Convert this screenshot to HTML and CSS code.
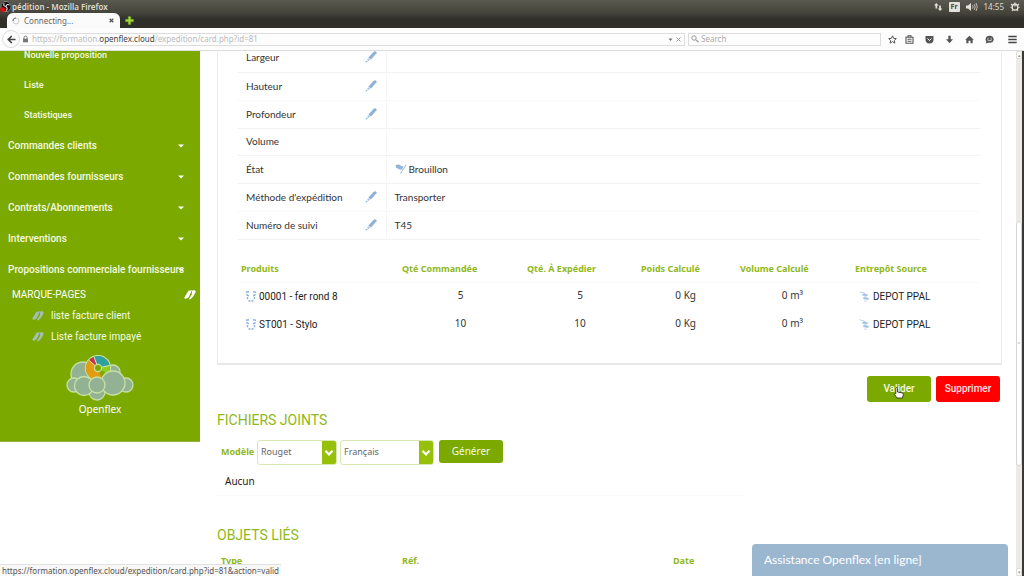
FILE: index.html
```html
<!DOCTYPE html>
<html lang="fr">
<head>
<meta charset="utf-8">
<title>Expédition</title>
<link rel="stylesheet" href="styles.css">
</head>
<body>
<svg class="defs" aria-hidden="true">
  <symbol id="pencil" viewBox="0 0 12 12"><path d="M10 .2c1.200 0 2 1 1.500 2L6 8.400 3.300 6.800 8.700.8z" fill="#8fb0d6"/><path d="M3 7.200l2.200 1.400-1.800 1.400-1.300-.8z" fill="#a9c3e0"/><path d="M1.700 9.700l1.100.9-1.700.9-.7-.5z" fill="#8fb0d6"/></symbol>
  <symbol id="book" viewBox="0 0 12 10"><path d="M4.500.800L8 .3 4.500 7.500 1.500 9 .2 7.800zM8.300.300h2.500l1 1.500-2.600 4.800-3 2.900-1.300-.5 2.900-4.500z" fill="currentColor"/></symbol>
  <symbol id="box" viewBox="0 0 12 12"><path d="M1 1.300l3-.5M11 1.300l-3-.5M1.300 3.500l2.700 1.300M10.700 3.500L8 4.800M2.500 6v2.300M9.500 6v2.300M3.500 9.500l2 .8M8.500 9.500l-2 .8" stroke="#8fb4dc" stroke-width="1.400" fill="none"/></symbol>
  <symbol id="depot" viewBox="0 0 12 12"><path d="M.5.700l3 1h2M3 4l2-1.500 4 1.500-2 1.300zM4 7l1.500-1 4.500 1.500-1 1.200-4.500-.9zM5 9.800l3 .7" stroke="#b4cce6" stroke-width=".7" fill="#a0bfe2"/></symbol>
  <symbol id="caret" viewBox="0 0 6 4"><path d="M0 .500h6L3 3.500z" fill="#fff"/></symbol>
  <symbol id="chevron" viewBox="0 0 10 8"><path d="M1.500 1.800L5 5.500l3.500-3.700" stroke="#fff" stroke-width="2.200" fill="none"/></symbol>
</svg>

<header class="browser">
  <div class="titlebar">
    <svg class="app-logo" viewBox="0 0 13 13"><circle cx="6.500" cy="6" r="6" fill="#111"/><circle cx="6.500" cy="6" r="5.500" fill="none" stroke="#ccc" stroke-width=".7"/><path d="M6.500 6Q3 5.500 4.500 2.500M6.500 6q1-3.500 4-1.500M6.500 6q2.500 2.500 0 4.500" stroke="#ddd" stroke-width="1.200" fill="none"/><circle cx="3" cy="9.500" r="2.600" fill="#f00808"/></svg>
    <span class="window-title">pédition - Mozilla Firefox</span>
    <div class="tray">
      <svg class="i10" viewBox="0 0 10 10"><path d="M2.500 6.500V3.500H1L3.300 1l2.300 2.500H4.200v3zM6.200 3.500v3H4.800L7.100 9l2.300-2.500H7.900v-3z" fill="#e4e1da"/></svg>
      <span class="lang">Fr</span>
      <svg class="i12" viewBox="0 0 12 10"><path d="M0 3.500h2L5 1v8L2 6.500H0z" fill="#e4e1da"/><path d="M6.500 3.200q1.200 1.800 0 3.600M8.200 2q2 3 0 6M10 1q2.600 4 0 8" stroke="#bdbab2" fill="none"/></svg>
      <span class="clock">14:55</span>
      <svg class="i10" viewBox="0 0 10 10"><circle cx="5" cy="5.200" r="2.900" stroke="#e4e1da" stroke-width="1.400" fill="none"/><path d="M5 .5v4M1.200 2l1 1M8.800 2l-1 1M.5 5.500h1M8.500 5.500h1M2 9l.7-.9M8 9l-.7-.9" stroke="#e4e1da" stroke-width="1.200"/></svg>
    </div>
  </div>
  <div class="tabs">
    <div class="tab">
      <svg class="i8" viewBox="0 0 8 8"><circle cx="4" cy="4" r="3" stroke="#ccc" fill="none"/><path d="M1 4a3 3 0 0 1 3-3" stroke="#777" stroke-width="1.200" fill="none"/></svg>
      <span>Connecting...</span>
      <button class="plain close" aria-label="Close tab"><svg class="i5" viewBox="0 0 5 5"><path d="M.7.700l3.600 3.600M4.300.700L.7 4.300" stroke="#555" stroke-width="1.300"/></svg></button>
    </div>
    <button class="plain" aria-label="New tab"><svg class="i9" viewBox="0 0 9 9"><path d="M3.300.5h2.400v2.800h2.800v2.400H5.700v2.800H3.300V5.700H.5V3.300h2.800z" fill="#a5dc3c" stroke="#6a9a1d" stroke-width=".5"/></svg></button>
  </div>
  <div class="toolbar">
    <button class="plain back" aria-label="Back"><svg class="i9" viewBox="0 0 9 9"><path d="M8.500 4.500H2M4.800 1L1.300 4.500 4.800 8" stroke="#444" stroke-width="1.700" fill="none"/></svg></button>
    <div class="urlbar">
      <svg class="i7" viewBox="0 0 7 8"><path d="M2 4V2.500a1.500 1.500 0 0 1 3 0V4" stroke="#777" fill="none"/><rect x="1" y="3.700" width="5" height="3.600" fill="#777"/></svg>
      <span class="url">https://formation.<b>openflex.cloud</b>/expedition/card.php?id=81</span>
      <svg class="i5" viewBox="0 0 5 5"><path d="M.5 1.500h4L2.500 4z" fill="#777"/></svg>
      <svg class="i5" viewBox="0 0 5 5"><path d="M.5.500l4 4M4.500.500l-4 4" stroke="#8a98a6"/></svg>
    </div>
    <label class="searchbar">
      <svg class="i8" viewBox="0 0 8 8"><circle cx="3" cy="3" r="2.200" stroke="#999" fill="none"/><path d="M4.600 4.600l3 2.600" stroke="#999" stroke-width="1.200"/></svg>
      <input type="text" placeholder="Search" aria-label="Search">
    </label>
    <div class="tools">
      <svg class="i9 star" viewBox="0 0 9 9"><path d="M4.500.800l1.100 2.500 2.700.3-2 1.800.6 2.700-2.400-1.400-2.400 1.400.6-2.700-2-1.800 2.700-.3z" stroke="#555" fill="none"/></svg>
      <svg class="i9" viewBox="0 0 9 9"><path d="M1 2.200h7v6H1zM3 2V.800h3V2M2.500 4.200h4M2.500 6.200h4" stroke="#555" stroke-width="1.100" fill="none"/></svg>
      <svg class="i9" viewBox="0 0 9 9"><path d="M.5 1h8v3.500a4 4 0 0 1-8 0z" fill="#555"/><path d="M2.500 3.500l2 2 2-2" stroke="#fff" fill="none"/></svg>
      <svg class="i9" viewBox="0 0 9 9"><path d="M3.300.8h2.400v3.500H8L4.500 8.300 1 4.300h2.300z" fill="#555"/></svg>
      <svg class="i9" viewBox="0 0 9 9"><path d="M4.500.700L8.800 4.700H7.700v3.600H5.500V5.800h-2v2.500H1.300V4.700H.2z" fill="#555"/></svg>
      <svg class="i9" viewBox="0 0 9 9"><ellipse cx="4.600" cy="4.300" rx="4" ry="3.500" fill="#555"/><path d="M1.500 6L.7 8.500 4 7.500z" fill="#555"/><path d="M2.200 4.800q2.400 1.600 4.800 0M2.600 3.300h1M5.600 3.300h1" stroke="#fff" stroke-width=".8" fill="none"/></svg>
      <svg class="i9 menu" viewBox="0 0 9 9"><path d="M.3 1.500h8.400M.3 4.500h8.400M.3 7.500h8.400" stroke="#444" stroke-width="1.500"/></svg>
    </div>
  </div>
</header>

<div class="viewport">
  <nav class="sidebar">
    <div class="menu-list">
      <a class="sub" href="#">Nouvelle proposition</a>
      <a class="sub" href="#">Liste</a>
      <a class="sub" href="#">Statistiques</a>
      <a class="group" href="#">Commandes clients<svg class="caret"><use href="#caret"/></svg></a>
      <a class="group" href="#">Commandes fournisseurs<svg class="caret"><use href="#caret"/></svg></a>
      <a class="group" href="#">Contrats/Abonnements<svg class="caret"><use href="#caret"/></svg></a>
      <a class="group" href="#">Interventions<svg class="caret"><use href="#caret"/></svg></a>
      <a class="group" href="#">Propositions commerciale fournisseurs<svg class="caret"><use href="#caret"/></svg></a>
    </div>
    <div class="bookmarks-title"><span>MARQUE-PAGES</span><svg class="book"><use href="#book"/></svg></div>
    <a class="bookmark" href="#"><svg class="book"><use href="#book"/></svg>liste facture client</a>
    <a class="bookmark" href="#"><svg class="book"><use href="#book"/></svg>Liste facture impayé</a>
    <div class="brand">
      <svg class="cloud" viewBox="0 0 68 47">
        <g fill="#93b294" stroke="#c8e0a4" stroke-width="1.300">
          <circle cx="17" cy="19" r="12"/><circle cx="47" cy="17" r="7"/><circle cx="8" cy="30" r="7"/><circle cx="60" cy="30" r="7"/>
          <circle cx="31" cy="37" r="8"/><circle cx="18" cy="31" r="9.500"/>
          <circle cx="32" cy="13" r="12.500" fill="#7ca900"/>
        </g>
        <path d="M32 13L36 24.300A12 12 0 0 1 22.500 5.500z" fill="#e29b12"/>
        <path d="M32 13L23 5.200a12 12 0 0 1 5-3.500z" fill="#cc2f56"/><path d="M32 13L28 1.700A12 12 0 0 1 43.600 10z" fill="#30a0a0"/>
        <path d="M32 13L43.800 11A12 12 0 0 1 42 19z" fill="#8fce24"/>
        <path d="M32 13L28 1.700M32 13L22.500 5M32 13l11.600-2.500" stroke="#d8ecb0"/>
        <circle cx="32" cy="13" r="3.600" fill="#7ca900" stroke="#c8e0a4" stroke-width="1.300"/>
        <g fill="#93b294" stroke="#c8e0a4" stroke-width="1.300"><circle cx="47" cy="28" r="12"/><circle cx="31" cy="30" r="8"/></g>
      </svg>
      <span>Openflex</span>
    </div>
  </nav>

  <main class="content">
    <section class="card">
      <table class="details">
        <tr><th>Largeur</th><td class="edit"><svg class="pencil"><use href="#pencil"/></svg></td><td></td></tr>
        <tr class="soft"><th>Hauteur</th><td class="edit"><svg class="pencil"><use href="#pencil"/></svg></td><td></td></tr>
        <tr><th>Profondeur</th><td class="edit"><svg class="pencil"><use href="#pencil"/></svg></td><td></td></tr>
        <tr class="short"><th>Volume</th><td class="edit"></td><td></td></tr>
        <tr><th>État</th><td class="edit"></td><td><span class="with-icon"><svg class="state" viewBox="0 0 12 12"><path d="M.5 2.500q3-2 5 0 1.500 1 3 .5L7 6.500Q4 7 3 5.500.5 5 .5 2.500zM5 10.500l.8.300L11.500 2l-.8-.3z" fill="#94b4d6"/></svg>Brouillon</span></td></tr>
        <tr class="soft"><th>Méthode d'expédition</th><td class="edit"><svg class="pencil"><use href="#pencil"/></svg></td><td>Transporter</td></tr>
        <tr><th>Numéro de suivi</th><td class="edit"><svg class="pencil"><use href="#pencil"/></svg></td><td>T45</td></tr>
      </table>
      <table class="products">
        <thead><tr><th class="c-product">Produits</th><th class="c-ordered">Qté Commandée</th><th class="c-ship">Qté. À Expédier</th><th class="c-weight">Poids Calculé</th><th class="c-volume">Volume Calculé</th><th>Entrepôt Source</th></tr></thead>
        <tbody>
          <tr><td class="name"><span class="with-icon"><svg class="item"><use href="#box"/></svg>00001 - fer rond 8</span></td><td class="qty">5</td><td class="qty">5</td><td class="weight">0 Kg</td><td class="volume">0 m³</td><td class="name depot"><span class="with-icon"><svg class="item"><use href="#depot"/></svg>DEPOT PPAL</span></td></tr>
          <tr><td class="name"><span class="with-icon"><svg class="item"><use href="#box"/></svg>ST001 - Stylo</span></td><td class="qty">10</td><td class="qty">10</td><td class="weight">0 Kg</td><td class="volume">0 m³</td><td class="name depot"><span class="with-icon"><svg class="item"><use href="#depot"/></svg>DEPOT PPAL</span></td></tr>
        </tbody>
      </table>
    </section>

    <div class="actions">
      <button class="btn validate">Valider
        <svg class="pointer" viewBox="0 0 10 12"><path d="M2.500.500q1 0 1 1V5l4.500.8q1.500.4 1.300 2L8.500 11H3L.6 7.500q.2-1.200 1.200-.8V1.500q0-1 .7-1z" fill="#fff" stroke="#333" stroke-width=".9"/></svg>
      </button>
      <button class="btn danger">Supprimer</button>
    </div>

    <h2>FICHIERS JOINTS</h2>
    <form class="generate">
      <label for="model">Modèle</label>
      <div class="select model"><select id="model"><option>Rouget</option></select><svg class="chevron"><use href="#chevron"/></svg></div>
      <div class="select language"><select aria-label="Langue"><option>Français</option></select><svg class="chevron"><use href="#chevron"/></svg></div>
      <button type="button" class="btn generate-btn">Générer</button>
    </form>
    <p class="empty">Aucun</p>

    <h2 class="linked-title">OBJETS LIÉS</h2>
    <table class="linked"><tr><th class="l-type">Type</th><th class="l-ref">Réf.</th><th>Date</th></tr></table>
  </main>

  <div class="scrollbar"><div class="arrow">▴</div><div class="track"></div><div class="thumb">=</div><div class="track end"></div><div class="arrow">▾</div></div>

  <div class="status">https://formation.openflex.cloud/expedition/card.php?id=81&amp;action=valid</div>
  <button class="assist">Assistance Openflex [en ligne]</button>
</div>
</body>
</html>
```

FILE: styles.css
```css
* { box-sizing: border-box; }
body {
  margin: 0;
  height: 100vh;
  display: flex;
  flex-direction: column;
  overflow: hidden;
  background: #fff;
  color: #333;
  font: 10px/14px "Noto Sans", "Open Sans", sans-serif;
}
a { color: inherit; text-decoration: none; }
svg { display: block; flex: none; }
.defs { position: absolute; width: 0; height: 0; }
button { font: inherit; }
.plain { border: 0; background: none; padding: 0; display: flex; }
.i5 { width: 5px; height: 5px; }
.i7 { width: 7px; height: 8px; }
.i8 { width: 8px; height: 8px; }
.i9 { width: 9px; height: 9px; }
.i10 { width: 10px; height: 10px; }
.i12 { width: 12px; height: 10px; }

/* Browser chrome */
.browser { flex: none; font-size: 8px; line-height: 10px; }
.titlebar {
  display: flex;
  align-items: center;
  height: 13px;
  background: linear-gradient(#5a594f, #45443c);
  color: #dfdbd2;
}
.app-logo { width: 12px; height: 12px; }
.window-title { font-weight: 600; }
.tray { display: flex; align-items: center; gap: 6px; margin-left: auto; padding-right: 4px; }
.lang { width: 11px; background: #e4e1da; color: #444; border-radius: 1px; font-weight: 700; font-size: 7px; text-align: center; }
.tabs {
  display: flex;
  align-items: center;
  gap: 5px;
  height: 15px;
  padding-left: 7px;
  background: linear-gradient(#45443c, #302f2a 40%);
}
.tab {
  display: flex;
  align-items: center;
  gap: 4px;
  width: 113px;
  height: 15px;
  padding: 0 6px 0 5px;
  border-radius: 6px 6px 0 0;
  background: #fbfbfb;
  color: #666;
}
.close { margin-left: auto; }
.toolbar {
  display: flex;
  align-items: center;
  height: 23px;
  padding: 0 7px 0 2px;
  background: #fdfdfd;
  border-bottom: 1px solid #ddd;
}
.back { width: 18px; height: 18px; align-items: center; justify-content: center; border: 1px solid #ddd; border-radius: 9px; }
.urlbar {
  display: flex;
  flex: 1;
  align-items: center;
  gap: 3px;
  height: 13px;
  padding: 0 3px 0 2px;
  border: 1px solid #ddd;
  border-left: 0;
}
.url { flex: 1; color: #bbb; }
.url b { color: #444; font-weight: 400; }
.searchbar {
  display: flex;
  align-items: center;
  gap: 2px;
  width: 193px;
  height: 13px;
  margin-left: 3px;
  padding-left: 2px;
  border: 1px solid #ddd;
}
.searchbar input { width: 100%; padding: 0; border: 0; background: none; outline: 0; font: 8px/10px "Noto Sans", sans-serif; }
.searchbar input::placeholder { color: #aaa; }
.tools { display: flex; gap: 11px; margin-left: 7px; }
.star { margin-right: -3px; }
.menu { margin-left: 3px; }

/* Page */
.viewport { position: relative; display: flex; flex: 1; min-height: 0; overflow: hidden; border-right: 2px solid #3a3936; }
.sidebar {
  flex: none;
  align-self: flex-start;
  width: 200px;
  padding-bottom: 25px;
  background: #7ca900;
  border-bottom: 1px solid #94b440;
  color: #f4fae0;
  font-family: Roboto, sans-serif;
  font-weight: 500;
}
.menu-list { margin-top: -11px; }
.sub { display: flex; align-items: center; height: 30px; padding-left: 24px; font-size: 9px; }
.group { display: flex; align-items: center; position: relative; height: 31px; padding: 1px 0 0 8px; white-space: nowrap; }
.caret { position: absolute; right: 16px; width: 6px; height: 4px; }
.bookmarks-title { display: flex; align-items: center; justify-content: space-between; height: 20px; padding: 0 4px 0 12px; font-weight: 400; color: #fff; }
.book { width: 12px; height: 10px; }
.bookmark { display: flex; align-items: center; gap: 7px; height: 21px; padding-left: 32px; font-weight: 400; }
.bookmark .book { color: #a5bfb4; }
.brand { display: flex; flex-direction: column; align-items: center; padding: 8px 0 0; font: 10px/14px "Noto Sans", sans-serif; color: #fff; }
.cloud { width: 68px; height: 47px; }

.content { flex: 1; min-width: 0; padding: 0 14px 0 17px; }
.card { padding: 0 21px 24px 19px; border: 1px solid #ececec; border-top: 0; border-bottom: 2px solid #e8e8e8; }
table { width: 100%; border-collapse: collapse; table-layout: fixed; }
th, td { padding: 0; text-align: left; font-weight: 400; }
.details { margin-top: -7px; font-family: Lato, sans-serif; }
.details tr { height: 28px; border-bottom: 1px solid #f2f2f2; }
.details tr.short { height: 27px; }
.details tr.soft { border-bottom-color: #f9f9f9; }
.details th, .details td { padding-bottom: 1px; }
.details th { width: 124px; padding-left: 9px; white-space: nowrap; }
.details td { padding-left: 8px; }
.details td.edit { width: 25px; padding-left: 4px; border-right: 1px solid #f6f6f6; }
.pencil { width: 12px; height: 12px; }
.with-icon { display: flex; align-items: center; gap: 2px; }
.state { width: 12px; height: 12px; }
.products { margin-top: 15px; }
.products th { height: 28px; padding: 1px 0 0 4px; color: #8fb820; font-weight: 700; font-size: 9px; border-bottom: 1px solid #fafafa; white-space: nowrap; }
.products td { height: 28px; padding-bottom: 3px; }
.c-product { width: 161px; }
.c-ordered { width: 125px; }
.c-ship { width: 114px; }
.c-weight { width: 99px; }
.c-volume { width: 115px; }
.products .name { padding: 0 0 0 8px; color: #222; font-family: Roboto, sans-serif; }
.item { width: 12px; height: 12px; }
.products .qty { text-align: center; }
.products .weight { text-align: right; padding-right: 40px; }
.products .volume { text-align: right; padding-right: 48px; }

.actions { display: flex; justify-content: flex-end; gap: 5px; padding: 11px 2px 0 0; }
.btn { position: relative; width: 64px; height: 26px; padding: 0; border: 0; border-radius: 3px; background: #7ca900; color: #f4fae0; font: 500 10px/14px Roboto, sans-serif; }
.btn.danger { background: #fe0000; color: #ffe0e0; }
.pointer { position: absolute; left: 27px; top: 11px; width: 10px; height: 12px; }
h2 { margin: 8px 0 0; color: #8fb820; font: 400 14px/20px Roboto, sans-serif; }
.generate { display: flex; align-items: center; gap: 3px; margin-top: 10px; padding-left: 4px; }
.generate label { width: 33px; color: #8fb820; font-weight: 700; font-size: 9px; }
.select { position: relative; height: 25px; }
.model { width: 80px; }
.language { width: 94px; }
.select select {
  appearance: none;
  width: 100%;
  height: 100%;
  padding: 0 18px 0 3px;
  border: 1px solid #d8e8b0;
  border-radius: 3px;
  background: linear-gradient(to left, #97c00a 14px, #fff 14px);
  color: #666;
  font: 9px/14px "Noto Sans", sans-serif;
}
.chevron { position: absolute; right: 3px; top: 9px; width: 10px; height: 8px; pointer-events: none; }
.btn.generate-btn { height: 23px; margin-left: 2px; align-self: flex-start; font-family: "Noto Sans", sans-serif; font-weight: 400; }
.empty { margin: 9px 259px 0 0; padding: 0 0 7px 8px; border-bottom: 1px solid #fafafa; color: #222; }
.linked-title { margin-top: 29px; }
.linked { margin-top: 8px; }
.linked th { height: 16px; padding-left: 4px; color: #8fb820; font-weight: 700; font-size: 9px; }
.l-type { width: 181px; }
.l-ref { width: 271px; }

.scrollbar { display: flex; flex-direction: column; flex: none; width: 6px; background: #ecebe8; }
.arrow { height: 8px; border: 1px solid #ddd; border-radius: 2px; background: #fff; color: #999; font-size: 5px; line-height: 6px; text-align: center; }
.track { flex: 163; }
.track.end { flex: 103; }
.thumb { flex: 244; display: flex; align-items: center; justify-content: center; border: 1px solid #d5d5d5; border-radius: 3px; background: #fff; color: #bbb; font-size: 5px; }

.status { position: absolute; left: 0; bottom: 0; height: 12px; padding: 0 2px; border-top: 1px solid #e0e0e0; background: #f8f8f8; color: #555; font-size: 8px; line-height: 11px; }
.assist {
  position: absolute;
  right: 14px;
  bottom: 0;
  width: 256px;
  height: 32px;
  padding: 0 12px;
  border: 0;
  border-radius: 4px 4px 0 0;
  background: #9bb7d0;
  color: #fff;
  font: 12px/16px Lato, sans-serif;
  text-align: left;
}
```
